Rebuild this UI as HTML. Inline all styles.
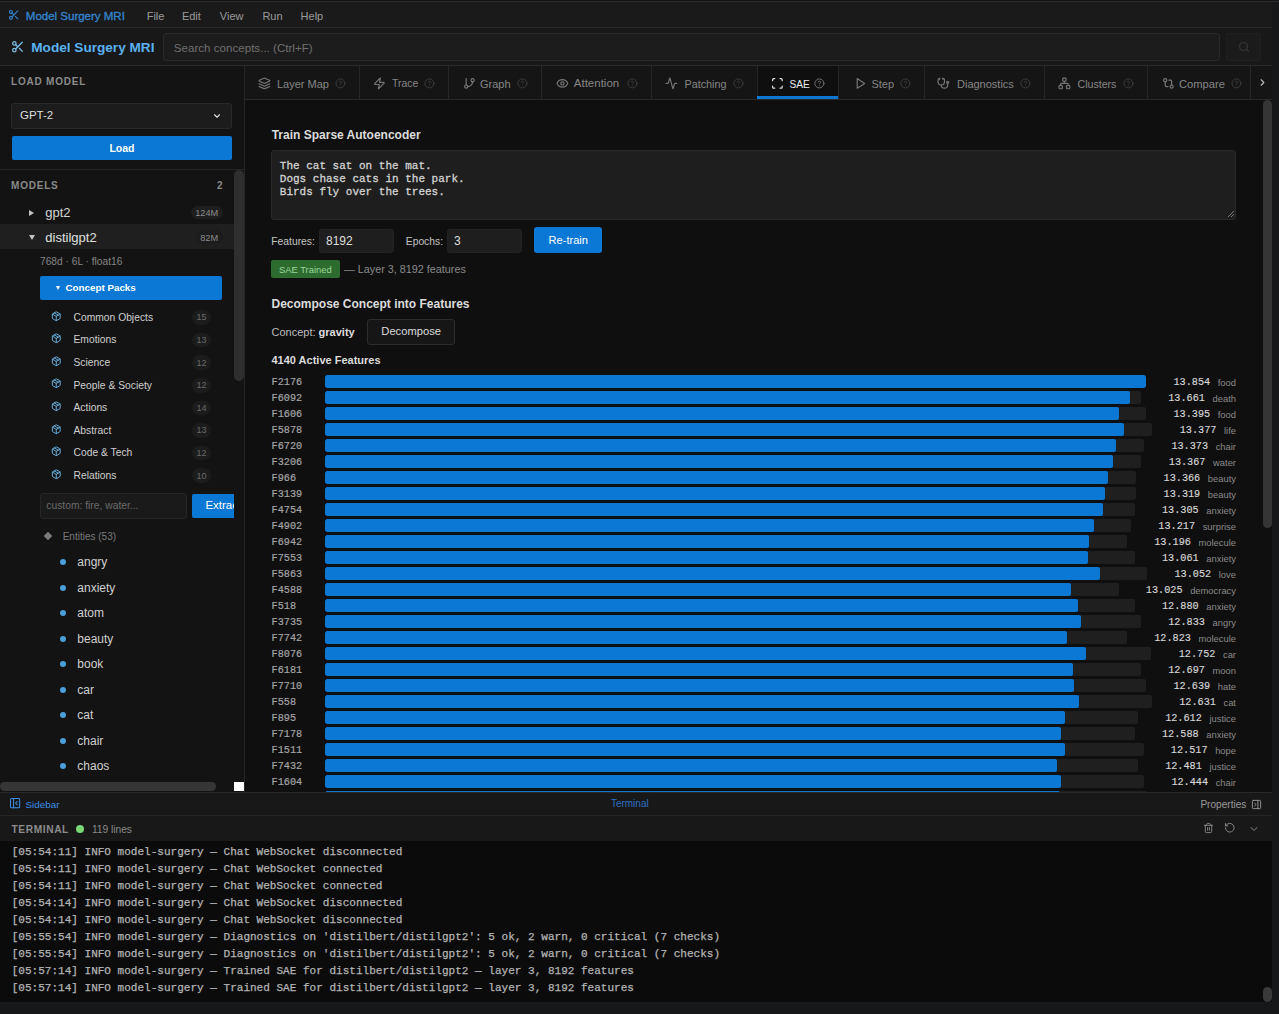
<!DOCTYPE html>
<html><head><meta charset="utf-8">
<style>
*{box-sizing:border-box;margin:0;padding:0}
html,body{width:1279px;height:1014px;overflow:hidden;background:#151719;font-family:"Liberation Sans",sans-serif;}
.abs{position:absolute}
svg.abs{display:block;overflow:visible}
.t{position:absolute;white-space:nowrap;line-height:1}
</style></head><body>
<div class="abs" style="left:0;top:0;width:1279px;height:1014px;background:#151719;overflow:hidden">

<div class="abs" style="left:0px;top:0px;width:1279px;height:1px;background:#141517"></div>
<div class="abs" style="left:0px;top:1px;width:1279px;height:1px;background:#2b2b2b"></div>
<div class="abs" style="left:0px;top:2px;width:1272px;height:26px;background:#1a1a1a;border-bottom:1px solid #2b2b2b"></div>
<svg class="abs" style="left:7.5px;top:8.8px;" width="11.8" height="11.8" viewBox="0 0 24 24" fill="none" stroke="#3383cc" stroke-width="2.3" stroke-linecap="round" stroke-linejoin="round"><circle cx="6" cy="6" r="3"/><path d="M8.12 8.12 12 12"/><path d="M20 4 8.12 15.88"/><circle cx="6" cy="18" r="3"/><path d="M14.8 14.8 20 20"/></svg>
<div class="t" style="left:25.80px;top:10.57px;font-size:11.5px;color:#3383cc;font-weight:400;font-family:'Liberation Sans',sans-serif;-webkit-text-stroke:0.35px #3383cc">Model Surgery MRI</div>
<div class="t" style="left:146.70px;top:10.99px;font-size:11px;color:#9a9a9a;font-weight:400;font-family:'Liberation Sans',sans-serif;">File</div>
<div class="t" style="left:181.90px;top:10.99px;font-size:11px;color:#9a9a9a;font-weight:400;font-family:'Liberation Sans',sans-serif;">Edit</div>
<div class="t" style="left:219.80px;top:10.99px;font-size:11px;color:#9a9a9a;font-weight:400;font-family:'Liberation Sans',sans-serif;">View</div>
<div class="t" style="left:262.40px;top:10.99px;font-size:11px;color:#9a9a9a;font-weight:400;font-family:'Liberation Sans',sans-serif;">Run</div>
<div class="t" style="left:300.60px;top:10.99px;font-size:11px;color:#9a9a9a;font-weight:400;font-family:'Liberation Sans',sans-serif;">Help</div>
<div class="abs" style="left:0px;top:28px;width:1272px;height:38px;background:#181818;border-bottom:1px solid #2b2b2b"></div>
<svg class="abs" style="left:11px;top:39.8px;" width="13.5" height="13.5" viewBox="0 0 24 24" fill="none" stroke="#78bce6" stroke-width="2.3" stroke-linecap="round" stroke-linejoin="round"><circle cx="6" cy="6" r="3"/><path d="M8.12 8.12 12 12"/><path d="M20 4 8.12 15.88"/><circle cx="6" cy="18" r="3"/><path d="M14.8 14.8 20 20"/></svg>
<div class="t" style="left:31.30px;top:41.09px;font-size:13.6px;color:#5ab2f0;font-weight:700;font-family:'Liberation Sans',sans-serif;">Model Surgery MRI</div>
<div class="abs" style="left:163px;top:32.5px;width:1057px;height:28.799999999999997px;background:#1c1c1c;border:1px solid #2a2a2a;border-radius:3px"></div>
<div class="t" style="left:173.80px;top:41.88px;font-size:11.6px;color:#707070;font-weight:400;font-family:'Liberation Sans',sans-serif;">Search concepts... (Ctrl+F)</div>
<div class="abs" style="left:1226px;top:32.5px;width:35px;height:28.799999999999997px;background:#1b1b1b;border:1px solid #202020;border-radius:2px"></div>
<svg class="abs" style="left:1238px;top:41px;" width="12" height="12" viewBox="0 0 24 24" fill="none" stroke="#363636" stroke-width="2.4" stroke-linecap="round" stroke-linejoin="round"><circle cx="11" cy="11" r="8"/><path d="m21 21-4.3-4.3"/></svg>
<div class="abs" style="left:0px;top:66px;width:245px;height:726px;background:#131313;border-right:1px solid #262626"></div>
<div class="t" style="left:11.00px;top:76.53px;font-size:10px;color:#8a8a8a;font-weight:700;font-family:'Liberation Sans',sans-serif;letter-spacing:0.8px;">LOAD MODEL</div>
<div class="abs" style="left:11px;top:103px;width:221px;height:25.5px;background:#1c1c1c;border:1px solid #2a2a2a;border-radius:3px"></div>
<div class="t" style="left:20.00px;top:109.87px;font-size:11.5px;color:#dedede;font-weight:400;font-family:'Liberation Sans',sans-serif;">GPT-2</div>
<svg class="abs" style="left:212px;top:111px;" width="10" height="10" viewBox="0 0 24 24" fill="none" stroke="#dedede" stroke-width="2.6" stroke-linecap="round" stroke-linejoin="round"><path d="m6 9 6 6 6-6"/></svg>
<div class="abs" style="left:12px;top:136px;width:220px;height:24px;background:#0a78d4;border-radius:2px"></div>
<div class="t" style="left:12px;top:143.01px;width:220px;text-align:center;font-size:10.5px;font-weight:700;color:#fff">Load</div>
<div class="abs" style="left:0px;top:169px;width:244px;height:1px;background:#262626"></div>
<div class="t" style="left:11.00px;top:180.94px;font-size:10px;color:#8a8a8a;font-weight:700;font-family:'Liberation Sans',sans-serif;letter-spacing:0.8px;">MODELS</div>
<div class="t" style="left:217.00px;top:180.94px;font-size:10px;color:#8a8a8a;font-weight:700;font-family:'Liberation Sans',sans-serif;">2</div>
<div class="abs" style="left:234px;top:170px;width:10px;height:211px;background:#2f2f2f;border-radius:5px"></div>
<div class="abs" style="left:0px;top:224.3px;width:234px;height:25.0px;background:#1f1f1f"></div>
<div class="abs" style="left:28.8px;top:210px;width:0;height:0;border-left:5px solid #c4c4c4;border-top:3px solid transparent;border-bottom:3px solid transparent"></div>
<div class="abs" style="left:28.6px;top:235.3px;width:0;height:0;border-top:5px solid #c4c4c4;border-left:3px solid transparent;border-right:3px solid transparent"></div>
<div class="t" style="left:45.30px;top:205.90px;font-size:13px;color:#d4d4d4;font-weight:400;font-family:'Liberation Sans',sans-serif;">gpt2</div>
<div class="t" style="left:45.30px;top:231.00px;font-size:13px;color:#e0e0e0;font-weight:400;font-family:'Liberation Sans',sans-serif;">distilgpt2</div>
<div class="abs" style="left:190.6px;top:205.7px;width:32.20000000000002px;height:13.700000000000017px;background:#1e1e1e;border-radius:7px"></div>
<div class="t" style="left:190.6px;top:208.81px;width:32.2px;text-align:center;font-size:9.2px;color:#8c8c8c">124M</div>
<div class="abs" style="left:195.5px;top:230px;width:27.30000000000001px;height:14px;background:#1c1c1c;border-radius:7px"></div>
<div class="t" style="left:195.5px;top:234.01px;width:27.3px;text-align:center;font-size:9.2px;color:#8c8c8c">82M</div>
<div class="t" style="left:40.00px;top:256.57px;font-size:10.2px;color:#858585;font-weight:400;font-family:'Liberation Sans',sans-serif;">768d · 6L · float16</div>
<div class="abs" style="left:40px;top:276px;width:182px;height:24px;background:#0a78d4;border-radius:2px"></div>
<div class="abs" style="left:56px;top:286px;width:0;height:0;border-top:4px solid #fff;border-left:2.5px solid transparent;border-right:2.5px solid transparent"></div>
<div class="t" style="left:65.50px;top:282.50px;font-size:9.8px;color:#ffffff;font-weight:700;font-family:'Liberation Sans',sans-serif;">Concept Packs</div>
<svg class="abs" style="left:51.3px;top:310.6px;" width="10.5" height="10.5" viewBox="0 0 24 24" fill="none" stroke="#6ab2e2" stroke-width="2.2" stroke-linecap="round" stroke-linejoin="round"><path d="M11 21.73a2 2 0 0 0 2 0l7-4A2 2 0 0 0 21 16V8a2 2 0 0 0-1-1.73l-7-4a2 2 0 0 0-2 0l-7 4A2 2 0 0 0 3 8v8a2 2 0 0 0 1 1.73z"/><path d="M12 22V12"/><path d="m3.3 7 7.703 4.734a2 2 0 0 0 1.994 0L20.7 7"/><path d="m7.5 4.27 9 5.15"/></svg>
<div class="t" style="left:73.50px;top:312.88px;font-size:10.3px;color:#cfcfcf;font-weight:400;font-family:'Liberation Sans',sans-serif;">Common Objects</div>
<div class="abs" style="left:191.7px;top:310.1px;width:19.700000000000017px;height:14.800000000000011px;background:#1c1c1c;border-radius:8px"></div>
<div class="t" style="left:191.7px;top:313.48px;width:19.7px;text-align:center;font-size:9px;color:#6a6a6a">15</div>
<svg class="abs" style="left:51.3px;top:333.20000000000005px;" width="10.5" height="10.5" viewBox="0 0 24 24" fill="none" stroke="#6ab2e2" stroke-width="2.2" stroke-linecap="round" stroke-linejoin="round"><path d="M11 21.73a2 2 0 0 0 2 0l7-4A2 2 0 0 0 21 16V8a2 2 0 0 0-1-1.73l-7-4a2 2 0 0 0-2 0l-7 4A2 2 0 0 0 3 8v8a2 2 0 0 0 1 1.73z"/><path d="M12 22V12"/><path d="m3.3 7 7.703 4.734a2 2 0 0 0 1.994 0L20.7 7"/><path d="m7.5 4.27 9 5.15"/></svg>
<div class="t" style="left:73.50px;top:335.48px;font-size:10.3px;color:#cfcfcf;font-weight:400;font-family:'Liberation Sans',sans-serif;">Emotions</div>
<div class="abs" style="left:191.7px;top:332.70000000000005px;width:19.700000000000017px;height:14.800000000000011px;background:#1c1c1c;border-radius:8px"></div>
<div class="t" style="left:191.7px;top:336.08px;width:19.7px;text-align:center;font-size:9px;color:#6a6a6a">13</div>
<svg class="abs" style="left:51.3px;top:355.8px;" width="10.5" height="10.5" viewBox="0 0 24 24" fill="none" stroke="#6ab2e2" stroke-width="2.2" stroke-linecap="round" stroke-linejoin="round"><path d="M11 21.73a2 2 0 0 0 2 0l7-4A2 2 0 0 0 21 16V8a2 2 0 0 0-1-1.73l-7-4a2 2 0 0 0-2 0l-7 4A2 2 0 0 0 3 8v8a2 2 0 0 0 1 1.73z"/><path d="M12 22V12"/><path d="m3.3 7 7.703 4.734a2 2 0 0 0 1.994 0L20.7 7"/><path d="m7.5 4.27 9 5.15"/></svg>
<div class="t" style="left:73.50px;top:358.08px;font-size:10.3px;color:#cfcfcf;font-weight:400;font-family:'Liberation Sans',sans-serif;">Science</div>
<div class="abs" style="left:191.7px;top:355.3px;width:19.700000000000017px;height:14.800000000000011px;background:#1c1c1c;border-radius:8px"></div>
<div class="t" style="left:191.7px;top:358.68px;width:19.7px;text-align:center;font-size:9px;color:#6a6a6a">12</div>
<svg class="abs" style="left:51.3px;top:378.40000000000003px;" width="10.5" height="10.5" viewBox="0 0 24 24" fill="none" stroke="#6ab2e2" stroke-width="2.2" stroke-linecap="round" stroke-linejoin="round"><path d="M11 21.73a2 2 0 0 0 2 0l7-4A2 2 0 0 0 21 16V8a2 2 0 0 0-1-1.73l-7-4a2 2 0 0 0-2 0l-7 4A2 2 0 0 0 3 8v8a2 2 0 0 0 1 1.73z"/><path d="M12 22V12"/><path d="m3.3 7 7.703 4.734a2 2 0 0 0 1.994 0L20.7 7"/><path d="m7.5 4.27 9 5.15"/></svg>
<div class="t" style="left:73.50px;top:380.68px;font-size:10.3px;color:#cfcfcf;font-weight:400;font-family:'Liberation Sans',sans-serif;">People &amp; Society</div>
<div class="abs" style="left:191.7px;top:377.90000000000003px;width:19.700000000000017px;height:14.800000000000011px;background:#1c1c1c;border-radius:8px"></div>
<div class="t" style="left:191.7px;top:381.28px;width:19.7px;text-align:center;font-size:9px;color:#6a6a6a">12</div>
<svg class="abs" style="left:51.3px;top:401.0px;" width="10.5" height="10.5" viewBox="0 0 24 24" fill="none" stroke="#6ab2e2" stroke-width="2.2" stroke-linecap="round" stroke-linejoin="round"><path d="M11 21.73a2 2 0 0 0 2 0l7-4A2 2 0 0 0 21 16V8a2 2 0 0 0-1-1.73l-7-4a2 2 0 0 0-2 0l-7 4A2 2 0 0 0 3 8v8a2 2 0 0 0 1 1.73z"/><path d="M12 22V12"/><path d="m3.3 7 7.703 4.734a2 2 0 0 0 1.994 0L20.7 7"/><path d="m7.5 4.27 9 5.15"/></svg>
<div class="t" style="left:73.50px;top:403.28px;font-size:10.3px;color:#cfcfcf;font-weight:400;font-family:'Liberation Sans',sans-serif;">Actions</div>
<div class="abs" style="left:191.7px;top:400.5px;width:19.700000000000017px;height:14.800000000000011px;background:#1c1c1c;border-radius:8px"></div>
<div class="t" style="left:191.7px;top:403.88px;width:19.7px;text-align:center;font-size:9px;color:#6a6a6a">14</div>
<svg class="abs" style="left:51.3px;top:423.6px;" width="10.5" height="10.5" viewBox="0 0 24 24" fill="none" stroke="#6ab2e2" stroke-width="2.2" stroke-linecap="round" stroke-linejoin="round"><path d="M11 21.73a2 2 0 0 0 2 0l7-4A2 2 0 0 0 21 16V8a2 2 0 0 0-1-1.73l-7-4a2 2 0 0 0-2 0l-7 4A2 2 0 0 0 3 8v8a2 2 0 0 0 1 1.73z"/><path d="M12 22V12"/><path d="m3.3 7 7.703 4.734a2 2 0 0 0 1.994 0L20.7 7"/><path d="m7.5 4.27 9 5.15"/></svg>
<div class="t" style="left:73.50px;top:425.88px;font-size:10.3px;color:#cfcfcf;font-weight:400;font-family:'Liberation Sans',sans-serif;">Abstract</div>
<div class="abs" style="left:191.7px;top:423.1px;width:19.700000000000017px;height:14.800000000000011px;background:#1c1c1c;border-radius:8px"></div>
<div class="t" style="left:191.7px;top:426.48px;width:19.7px;text-align:center;font-size:9px;color:#6a6a6a">13</div>
<svg class="abs" style="left:51.3px;top:446.20000000000005px;" width="10.5" height="10.5" viewBox="0 0 24 24" fill="none" stroke="#6ab2e2" stroke-width="2.2" stroke-linecap="round" stroke-linejoin="round"><path d="M11 21.73a2 2 0 0 0 2 0l7-4A2 2 0 0 0 21 16V8a2 2 0 0 0-1-1.73l-7-4a2 2 0 0 0-2 0l-7 4A2 2 0 0 0 3 8v8a2 2 0 0 0 1 1.73z"/><path d="M12 22V12"/><path d="m3.3 7 7.703 4.734a2 2 0 0 0 1.994 0L20.7 7"/><path d="m7.5 4.27 9 5.15"/></svg>
<div class="t" style="left:73.50px;top:448.48px;font-size:10.3px;color:#cfcfcf;font-weight:400;font-family:'Liberation Sans',sans-serif;">Code &amp; Tech</div>
<div class="abs" style="left:191.7px;top:445.70000000000005px;width:19.700000000000017px;height:14.800000000000011px;background:#1c1c1c;border-radius:8px"></div>
<div class="t" style="left:191.7px;top:449.08px;width:19.7px;text-align:center;font-size:9px;color:#6a6a6a">12</div>
<svg class="abs" style="left:51.3px;top:468.80000000000007px;" width="10.5" height="10.5" viewBox="0 0 24 24" fill="none" stroke="#6ab2e2" stroke-width="2.2" stroke-linecap="round" stroke-linejoin="round"><path d="M11 21.73a2 2 0 0 0 2 0l7-4A2 2 0 0 0 21 16V8a2 2 0 0 0-1-1.73l-7-4a2 2 0 0 0-2 0l-7 4A2 2 0 0 0 3 8v8a2 2 0 0 0 1 1.73z"/><path d="M12 22V12"/><path d="m3.3 7 7.703 4.734a2 2 0 0 0 1.994 0L20.7 7"/><path d="m7.5 4.27 9 5.15"/></svg>
<div class="t" style="left:73.50px;top:471.08px;font-size:10.3px;color:#cfcfcf;font-weight:400;font-family:'Liberation Sans',sans-serif;">Relations</div>
<div class="abs" style="left:191.7px;top:468.30000000000007px;width:19.700000000000017px;height:14.800000000000011px;background:#1c1c1c;border-radius:8px"></div>
<div class="t" style="left:191.7px;top:471.68px;width:19.7px;text-align:center;font-size:9px;color:#6a6a6a">10</div>
<div class="abs" style="left:40px;top:493px;width:146.5px;height:26px;background:#1a1a1a;border:1px solid #262626;border-radius:3px"></div>
<div class="t" style="left:46.30px;top:501.28px;font-size:10.3px;color:#6a6a6a;font-weight:400;font-family:'Liberation Sans',sans-serif;">custom: fire, water...</div>
<div class="abs" style="left:191.7px;top:493.5px;width:48.30000000000001px;height:24.5px;background:#0a78d4;border-radius:2px"></div>
<div class="t" style="left:205.40px;top:500.27px;font-size:11.5px;color:#ffffff;font-weight:400;font-family:'Liberation Sans',sans-serif;">Extract</div>
<div class="abs" style="left:234px;top:390px;width:10px;height:402px;background:#131313"></div>
<div class="abs" style="left:45px;top:533px;width:6px;height:6px;background:#7a7a7a;transform:rotate(45deg)"></div>
<div class="t" style="left:62.70px;top:532.13px;font-size:10px;color:#7a7a7a;font-weight:400;font-family:'Liberation Sans',sans-serif;">Entities (53)</div>
<div class="abs" style="left:60px;top:559.3px;width:6px;height:6.0px;background:#4a9fd8;border-radius:50%"></div>
<div class="t" style="left:77.30px;top:556.14px;font-size:12px;color:#d0d0d0;font-weight:400;font-family:'Liberation Sans',sans-serif;">angry</div>
<div class="abs" style="left:60px;top:584.8px;width:6px;height:6.0px;background:#4a9fd8;border-radius:50%"></div>
<div class="t" style="left:77.30px;top:581.64px;font-size:12px;color:#d0d0d0;font-weight:400;font-family:'Liberation Sans',sans-serif;">anxiety</div>
<div class="abs" style="left:60px;top:610.3px;width:6px;height:6.0px;background:#4a9fd8;border-radius:50%"></div>
<div class="t" style="left:77.30px;top:607.14px;font-size:12px;color:#d0d0d0;font-weight:400;font-family:'Liberation Sans',sans-serif;">atom</div>
<div class="abs" style="left:60px;top:635.8px;width:6px;height:6.0px;background:#4a9fd8;border-radius:50%"></div>
<div class="t" style="left:77.30px;top:632.64px;font-size:12px;color:#d0d0d0;font-weight:400;font-family:'Liberation Sans',sans-serif;">beauty</div>
<div class="abs" style="left:60px;top:661.3px;width:6px;height:6.0px;background:#4a9fd8;border-radius:50%"></div>
<div class="t" style="left:77.30px;top:658.14px;font-size:12px;color:#d0d0d0;font-weight:400;font-family:'Liberation Sans',sans-serif;">book</div>
<div class="abs" style="left:60px;top:686.8px;width:6px;height:6.0px;background:#4a9fd8;border-radius:50%"></div>
<div class="t" style="left:77.30px;top:683.64px;font-size:12px;color:#d0d0d0;font-weight:400;font-family:'Liberation Sans',sans-serif;">car</div>
<div class="abs" style="left:60px;top:712.3px;width:6px;height:6.0px;background:#4a9fd8;border-radius:50%"></div>
<div class="t" style="left:77.30px;top:709.14px;font-size:12px;color:#d0d0d0;font-weight:400;font-family:'Liberation Sans',sans-serif;">cat</div>
<div class="abs" style="left:60px;top:737.8px;width:6px;height:6.0px;background:#4a9fd8;border-radius:50%"></div>
<div class="t" style="left:77.30px;top:734.64px;font-size:12px;color:#d0d0d0;font-weight:400;font-family:'Liberation Sans',sans-serif;">chair</div>
<div class="abs" style="left:60px;top:763.3px;width:6px;height:6.0px;background:#4a9fd8;border-radius:50%"></div>
<div class="t" style="left:77.30px;top:760.14px;font-size:12px;color:#d0d0d0;font-weight:400;font-family:'Liberation Sans',sans-serif;">chaos</div>
<div class="abs" style="left:0px;top:782px;width:216px;height:9px;background:#363636;border-radius:5px"></div>
<div class="abs" style="left:234px;top:782px;width:10px;height:9px;background:#ffffff"></div>
<div class="abs" style="left:245px;top:66px;width:1027px;height:726px;background:#0f0f0f"></div>
<div class="abs" style="left:245px;top:66px;width:1027px;height:34px;background:#151515;border-bottom:1px solid #2a2a2a"></div>
<div class="abs" style="left:359px;top:66px;width:1px;height:33px;background:#262626"></div>
<div class="abs" style="left:448px;top:66px;width:1px;height:33px;background:#262626"></div>
<div class="abs" style="left:541px;top:66px;width:1px;height:33px;background:#262626"></div>
<div class="abs" style="left:651px;top:66px;width:1px;height:33px;background:#262626"></div>
<div class="abs" style="left:838px;top:66px;width:1px;height:33px;background:#262626"></div>
<div class="abs" style="left:924px;top:66px;width:1px;height:33px;background:#262626"></div>
<div class="abs" style="left:1044px;top:66px;width:1px;height:33px;background:#262626"></div>
<div class="abs" style="left:1147px;top:66px;width:1px;height:33px;background:#262626"></div>
<div class="abs" style="left:1250px;top:66px;width:1px;height:33px;background:#262626"></div>
<div class="abs" style="left:757px;top:66px;width:81px;height:33px;background:#0f0f0f;border-left:1px solid #262626"></div>
<div class="abs" style="left:757px;top:96px;width:81px;height:3px;background:#0a78d4"></div>
<svg class="abs" style="left:257.5px;top:76.5px;" width="12.8" height="12.8" viewBox="0 0 24 24" fill="none" stroke="#767676" stroke-width="2.2" stroke-linecap="round" stroke-linejoin="round"><path d="m12.83 2.18a2 2 0 0 0-1.66 0L2.6 6.08a1 1 0 0 0 0 1.83l8.58 3.91a2 2 0 0 0 1.66 0l8.58-3.9a1 1 0 0 0 0-1.83Z"/><path d="m22 17.65-9.17 4.16a2 2 0 0 1-1.66 0L2 17.65"/><path d="m22 12.65-9.17 4.16a2 2 0 0 1-1.66 0L2 12.65"/></svg>
<div class="t" style="left:277.00px;top:78.89px;font-size:11px;color:#868686;font-weight:400;font-family:'Liberation Sans',sans-serif;">Layer Map</div>
<svg class="abs" style="left:334.5px;top:77.8px;" width="10.8" height="10.8" viewBox="0 0 24 24" fill="none" stroke="#3e3e3e" stroke-width="2" stroke-linecap="round" stroke-linejoin="round"><circle cx="12" cy="12" r="10"/><path d="M9.09 9a3 3 0 0 1 5.83 1c0 2-3 3-3 3"/><path d="M12 17h.01"/></svg>
<svg class="abs" style="left:372.5px;top:76.5px;" width="12.8" height="12.8" viewBox="0 0 24 24" fill="none" stroke="#767676" stroke-width="2.2" stroke-linecap="round" stroke-linejoin="round"><path d="M4 14a1 1 0 0 1-.78-1.63l9.9-10.2a.5.5 0 0 1 .86.46l-1.92 6.02A1 1 0 0 0 13 10h7a1 1 0 0 1 .78 1.63l-9.9 10.2a.5.5 0 0 1-.86-.46l1.92-6.02A1 1 0 0 0 11 14z"/></svg>
<div class="t" style="left:392.00px;top:79.40px;font-size:10.4px;color:#868686;font-weight:400;font-family:'Liberation Sans',sans-serif;">Trace</div>
<svg class="abs" style="left:423.8px;top:77.8px;" width="10.8" height="10.8" viewBox="0 0 24 24" fill="none" stroke="#3e3e3e" stroke-width="2" stroke-linecap="round" stroke-linejoin="round"><circle cx="12" cy="12" r="10"/><path d="M9.09 9a3 3 0 0 1 5.83 1c0 2-3 3-3 3"/><path d="M12 17h.01"/></svg>
<svg class="abs" style="left:462.5px;top:76.5px;" width="12.8" height="12.8" viewBox="0 0 24 24" fill="none" stroke="#767676" stroke-width="2.2" stroke-linecap="round" stroke-linejoin="round"><line x1="6" x2="6" y1="3" y2="15"/><circle cx="18" cy="6" r="3"/><circle cx="6" cy="18" r="3"/><path d="M18 9a9 9 0 0 1-9 9"/></svg>
<div class="t" style="left:480.00px;top:78.89px;font-size:11px;color:#868686;font-weight:400;font-family:'Liberation Sans',sans-serif;">Graph</div>
<svg class="abs" style="left:517px;top:77.8px;" width="10.8" height="10.8" viewBox="0 0 24 24" fill="none" stroke="#3e3e3e" stroke-width="2" stroke-linecap="round" stroke-linejoin="round"><circle cx="12" cy="12" r="10"/><path d="M9.09 9a3 3 0 0 1 5.83 1c0 2-3 3-3 3"/><path d="M12 17h.01"/></svg>
<svg class="abs" style="left:555.5px;top:76.5px;" width="12.8" height="12.8" viewBox="0 0 24 24" fill="none" stroke="#767676" stroke-width="2.2" stroke-linecap="round" stroke-linejoin="round"><path d="M2.062 12.348a1 1 0 0 1 0-.696 10.75 10.75 0 0 1 19.876 0 1 1 0 0 1 0 .696 10.75 10.75 0 0 1-19.876 0"/><circle cx="12" cy="12" r="3"/></svg>
<div class="t" style="left:573.80px;top:78.47px;font-size:11.5px;color:#868686;font-weight:400;font-family:'Liberation Sans',sans-serif;">Attention</div>
<svg class="abs" style="left:627px;top:77.8px;" width="10.8" height="10.8" viewBox="0 0 24 24" fill="none" stroke="#3e3e3e" stroke-width="2" stroke-linecap="round" stroke-linejoin="round"><circle cx="12" cy="12" r="10"/><path d="M9.09 9a3 3 0 0 1 5.83 1c0 2-3 3-3 3"/><path d="M12 17h.01"/></svg>
<svg class="abs" style="left:665px;top:76.5px;" width="12.8" height="12.8" viewBox="0 0 24 24" fill="none" stroke="#767676" stroke-width="2.2" stroke-linecap="round" stroke-linejoin="round"><path d="M22 12h-2.48a2 2 0 0 0-1.93 1.46l-2.35 8.36a.25.25 0 0 1-.48 0L9.24 2.18a.25.25 0 0 0-.48 0l-2.35 8.36A2 2 0 0 1 4.49 12H2"/></svg>
<div class="t" style="left:684.50px;top:79.06px;font-size:10.8px;color:#868686;font-weight:400;font-family:'Liberation Sans',sans-serif;">Patching</div>
<svg class="abs" style="left:732.5px;top:77.8px;" width="10.8" height="10.8" viewBox="0 0 24 24" fill="none" stroke="#3e3e3e" stroke-width="2" stroke-linecap="round" stroke-linejoin="round"><circle cx="12" cy="12" r="10"/><path d="M9.09 9a3 3 0 0 1 5.83 1c0 2-3 3-3 3"/><path d="M12 17h.01"/></svg>
<svg class="abs" style="left:770.5px;top:76.5px;" width="12.8" height="12.8" viewBox="0 0 24 24" fill="none" stroke="#e6e6e6" stroke-width="2.2" stroke-linecap="round" stroke-linejoin="round"><path d="M3 7V5a2 2 0 0 1 2-2h2"/><path d="M17 3h2a2 2 0 0 1 2 2v2"/><path d="M21 17v2a2 2 0 0 1-2 2h-2"/><path d="M7 21H5a2 2 0 0 1-2-2v-2"/></svg>
<div class="t" style="left:789.50px;top:79.57px;font-size:10.2px;color:#ececec;font-weight:400;font-family:'Liberation Sans',sans-serif;">SAE</div>
<svg class="abs" style="left:813.8px;top:77.8px;" width="10.8" height="10.8" viewBox="0 0 24 24" fill="none" stroke="#7a7a7a" stroke-width="2" stroke-linecap="round" stroke-linejoin="round"><circle cx="12" cy="12" r="10"/><path d="M9.09 9a3 3 0 0 1 5.83 1c0 2-3 3-3 3"/><path d="M12 17h.01"/></svg>
<svg class="abs" style="left:853.9px;top:76.5px;" width="12.8" height="12.8" viewBox="0 0 24 24" fill="none" stroke="#767676" stroke-width="2.2" stroke-linecap="round" stroke-linejoin="round"><polygon points="6 3 20 12 6 21 6 3"/></svg>
<div class="t" style="left:871.40px;top:78.89px;font-size:11px;color:#868686;font-weight:400;font-family:'Liberation Sans',sans-serif;">Step</div>
<svg class="abs" style="left:900px;top:77.8px;" width="10.8" height="10.8" viewBox="0 0 24 24" fill="none" stroke="#3e3e3e" stroke-width="2" stroke-linecap="round" stroke-linejoin="round"><circle cx="12" cy="12" r="10"/><path d="M9.09 9a3 3 0 0 1 5.83 1c0 2-3 3-3 3"/><path d="M12 17h.01"/></svg>
<svg class="abs" style="left:937px;top:76.5px;" width="12.8" height="12.8" viewBox="0 0 24 24" fill="none" stroke="#767676" stroke-width="2.2" stroke-linecap="round" stroke-linejoin="round"><path d="M11 2v2"/><path d="M5 2v2"/><path d="M5 3H4a2 2 0 0 0-2 2v4a6 6 0 0 0 12 0V5a2 2 0 0 0-2-2h-1"/><path d="M8 15a6 6 0 0 0 12 0v-3"/><circle cx="20" cy="10" r="2"/></svg>
<div class="t" style="left:957.00px;top:78.89px;font-size:11px;color:#868686;font-weight:400;font-family:'Liberation Sans',sans-serif;">Diagnostics</div>
<svg class="abs" style="left:1020px;top:77.8px;" width="10.8" height="10.8" viewBox="0 0 24 24" fill="none" stroke="#3e3e3e" stroke-width="2" stroke-linecap="round" stroke-linejoin="round"><circle cx="12" cy="12" r="10"/><path d="M9.09 9a3 3 0 0 1 5.83 1c0 2-3 3-3 3"/><path d="M12 17h.01"/></svg>
<svg class="abs" style="left:1058px;top:76.5px;" width="12.8" height="12.8" viewBox="0 0 24 24" fill="none" stroke="#767676" stroke-width="2.2" stroke-linecap="round" stroke-linejoin="round"><rect x="16" y="16" width="6" height="6" rx="1"/><rect x="2" y="16" width="6" height="6" rx="1"/><rect x="9" y="2" width="6" height="6" rx="1"/><path d="M5 16v-3a1 1 0 0 1 1-1h12a1 1 0 0 1 1 1v3"/><path d="M12 12V8"/></svg>
<div class="t" style="left:1077.50px;top:79.23px;font-size:10.6px;color:#868686;font-weight:400;font-family:'Liberation Sans',sans-serif;">Clusters</div>
<svg class="abs" style="left:1123px;top:77.8px;" width="10.8" height="10.8" viewBox="0 0 24 24" fill="none" stroke="#3e3e3e" stroke-width="2" stroke-linecap="round" stroke-linejoin="round"><circle cx="12" cy="12" r="10"/><path d="M9.09 9a3 3 0 0 1 5.83 1c0 2-3 3-3 3"/><path d="M12 17h.01"/></svg>
<svg class="abs" style="left:1161.7px;top:76.5px;" width="12.8" height="12.8" viewBox="0 0 24 24" fill="none" stroke="#767676" stroke-width="2.2" stroke-linecap="round" stroke-linejoin="round"><circle cx="18" cy="18" r="3"/><circle cx="6" cy="6" r="3"/><path d="M13 6h3a2 2 0 0 1 2 2v7"/><path d="M11 18H8a2 2 0 0 1-2-2V9"/></svg>
<div class="t" style="left:1179.00px;top:78.72px;font-size:11.2px;color:#868686;font-weight:400;font-family:'Liberation Sans',sans-serif;">Compare</div>
<svg class="abs" style="left:1231px;top:77.8px;" width="10.8" height="10.8" viewBox="0 0 24 24" fill="none" stroke="#3e3e3e" stroke-width="2" stroke-linecap="round" stroke-linejoin="round"><circle cx="12" cy="12" r="10"/><path d="M9.09 9a3 3 0 0 1 5.83 1c0 2-3 3-3 3"/><path d="M12 17h.01"/></svg>
<svg class="abs" style="left:1257px;top:77px;" width="11" height="11" viewBox="0 0 24 24" fill="none" stroke="#bdbdbd" stroke-width="2.4" stroke-linecap="round" stroke-linejoin="round"><path d="m9 18 6-6-6-6"/></svg>
<div class="t" style="left:271.70px;top:129.14px;font-size:12px;color:#dcdcdc;font-weight:700;font-family:'Liberation Sans',sans-serif;">Train Sparse Autoencoder</div>
<div class="abs" style="left:271px;top:150px;width:965px;height:69.5px;background:#1e1e1e;border:1px solid #292929;border-radius:3px"></div>
<div class="t" style="left:279.80px;top:160.57px;font-size:11px;color:#d2d2d2;font-weight:400;font-family:'Liberation Mono',monospace;-webkit-text-stroke:0.3px #d2d2d2">The cat sat on the mat.</div>
<div class="t" style="left:279.80px;top:173.67px;font-size:11px;color:#d2d2d2;font-weight:400;font-family:'Liberation Mono',monospace;-webkit-text-stroke:0.3px #d2d2d2">Dogs chase cats in the park.</div>
<div class="t" style="left:279.80px;top:186.77px;font-size:11px;color:#d2d2d2;font-weight:400;font-family:'Liberation Mono',monospace;-webkit-text-stroke:0.3px #d2d2d2">Birds fly over the trees.</div>
<svg class="abs" style="left:1227px;top:210px" width="8" height="8" viewBox="0 0 8 8"><path d="M7 1 1 7M7 4 4 7" stroke="#777" stroke-width="1"/></svg>
<div class="t" style="left:271.30px;top:236.78px;font-size:10.3px;color:#c4c4c4;font-weight:400;font-family:'Liberation Sans',sans-serif;">Features:</div>
<div class="abs" style="left:319px;top:229px;width:75px;height:23.5px;background:#1e1e1e;border:1px solid #232323;border-radius:3px"></div>
<div class="t" style="left:326.00px;top:234.84px;font-size:12px;color:#dedede;font-weight:400;font-family:'Liberation Sans',sans-serif;">8192</div>
<div class="t" style="left:405.80px;top:236.78px;font-size:10.3px;color:#c4c4c4;font-weight:400;font-family:'Liberation Sans',sans-serif;">Epochs:</div>
<div class="abs" style="left:447px;top:229px;width:75px;height:23.5px;background:#1e1e1e;border:1px solid #232323;border-radius:3px"></div>
<div class="t" style="left:454.00px;top:234.84px;font-size:12px;color:#dedede;font-weight:400;font-family:'Liberation Sans',sans-serif;">3</div>
<div class="abs" style="left:534px;top:227px;width:68px;height:26px;background:#0a78d4;border-radius:3px"></div>
<div class="t" style="left:548.50px;top:234.90px;font-size:11.1px;color:#ffffff;font-weight:400;font-family:'Liberation Sans',sans-serif;">Re-train</div>
<div class="abs" style="left:271px;top:260px;width:69px;height:18px;background:#2d6b2f;border-radius:2px"></div>
<div class="t" style="left:279.00px;top:265.04px;font-size:9.4px;color:#9bd89b;font-weight:400;font-family:'Liberation Sans',sans-serif;">SAE Trained</div>
<div class="t" style="left:344.00px;top:263.86px;font-size:10.8px;color:#8a8a8a;font-weight:400;font-family:'Liberation Sans',sans-serif;">— Layer 3, 8192 features</div>
<div class="t" style="left:271.50px;top:297.54px;font-size:12px;color:#dcdcdc;font-weight:700;font-family:'Liberation Sans',sans-serif;">Decompose Concept into Features</div>
<div class="t" style="left:271.5px;top:326.99px;font-size:11px;color:#bdbdbd">Concept: <b style="color:#dedede">gravity</b></div>
<div class="abs" style="left:367px;top:318.5px;width:88px;height:26.5px;background:#161616;border:1px solid #2c2c2c;border-radius:3px"></div>
<div class="t" style="left:381.30px;top:325.72px;font-size:11.2px;color:#dcdcdc;font-weight:400;font-family:'Liberation Sans',sans-serif;">Decompose</div>
<div class="t" style="left:271.50px;top:355.19px;font-size:11px;color:#dcdcdc;font-weight:700;font-family:'Liberation Sans',sans-serif;">4140 Active Features</div>
<div class="abs" style="left:271.6px;top:375px;width:964.4px;height:13px;display:flex;align-items:center"><div style="width:53.7px;font-family:'Liberation Mono',monospace;font-size:10.2px;color:#a4a4a4;-webkit-text-stroke:0.2px #a4a4a4;line-height:13px;white-space:nowrap;position:relative;top:1.4px">F2176</div><div style="flex:1;height:13px;background:#1f1f1f;border-radius:2px;position:relative;overflow:hidden"><div style="position:absolute;left:0;top:0;bottom:0;width:100.000%;background:#0a78d4;border-radius:2px"></div></div><div style="width:64px;text-align:right;font-family:'Liberation Mono',monospace;font-size:10.2px;font-weight:400;-webkit-text-stroke:0.15px #d8d8d8;color:#d8d8d8;line-height:13px;white-space:nowrap;position:relative;top:1px">13.854</div><div style="margin-left:7.6px;font-size:9.4px;color:#8a8a8a;line-height:13px;white-space:nowrap;position:relative;top:1.2px">food</div></div>
<div class="abs" style="left:271.6px;top:391px;width:964.4px;height:13px;display:flex;align-items:center"><div style="width:53.7px;font-family:'Liberation Mono',monospace;font-size:10.2px;color:#a4a4a4;-webkit-text-stroke:0.2px #a4a4a4;line-height:13px;white-space:nowrap;position:relative;top:1.4px">F6092</div><div style="flex:1;height:13px;background:#1f1f1f;border-radius:2px;position:relative;overflow:hidden"><div style="position:absolute;left:0;top:0;bottom:0;width:98.607%;background:#0a78d4;border-radius:2px"></div></div><div style="width:64px;text-align:right;font-family:'Liberation Mono',monospace;font-size:10.2px;font-weight:400;-webkit-text-stroke:0.15px #d8d8d8;color:#d8d8d8;line-height:13px;white-space:nowrap;position:relative;top:1px">13.661</div><div style="margin-left:7.6px;font-size:9.4px;color:#8a8a8a;line-height:13px;white-space:nowrap;position:relative;top:1.2px">death</div></div>
<div class="abs" style="left:271.6px;top:407px;width:964.4px;height:13px;display:flex;align-items:center"><div style="width:53.7px;font-family:'Liberation Mono',monospace;font-size:10.2px;color:#a4a4a4;-webkit-text-stroke:0.2px #a4a4a4;line-height:13px;white-space:nowrap;position:relative;top:1.4px">F1606</div><div style="flex:1;height:13px;background:#1f1f1f;border-radius:2px;position:relative;overflow:hidden"><div style="position:absolute;left:0;top:0;bottom:0;width:96.687%;background:#0a78d4;border-radius:2px"></div></div><div style="width:64px;text-align:right;font-family:'Liberation Mono',monospace;font-size:10.2px;font-weight:400;-webkit-text-stroke:0.15px #d8d8d8;color:#d8d8d8;line-height:13px;white-space:nowrap;position:relative;top:1px">13.395</div><div style="margin-left:7.6px;font-size:9.4px;color:#8a8a8a;line-height:13px;white-space:nowrap;position:relative;top:1.2px">food</div></div>
<div class="abs" style="left:271.6px;top:423px;width:964.4px;height:13px;display:flex;align-items:center"><div style="width:53.7px;font-family:'Liberation Mono',monospace;font-size:10.2px;color:#a4a4a4;-webkit-text-stroke:0.2px #a4a4a4;line-height:13px;white-space:nowrap;position:relative;top:1.4px">F5878</div><div style="flex:1;height:13px;background:#1f1f1f;border-radius:2px;position:relative;overflow:hidden"><div style="position:absolute;left:0;top:0;bottom:0;width:96.557%;background:#0a78d4;border-radius:2px"></div></div><div style="width:64px;text-align:right;font-family:'Liberation Mono',monospace;font-size:10.2px;font-weight:400;-webkit-text-stroke:0.15px #d8d8d8;color:#d8d8d8;line-height:13px;white-space:nowrap;position:relative;top:1px">13.377</div><div style="margin-left:7.6px;font-size:9.4px;color:#8a8a8a;line-height:13px;white-space:nowrap;position:relative;top:1.2px">life</div></div>
<div class="abs" style="left:271.6px;top:439px;width:964.4px;height:13px;display:flex;align-items:center"><div style="width:53.7px;font-family:'Liberation Mono',monospace;font-size:10.2px;color:#a4a4a4;-webkit-text-stroke:0.2px #a4a4a4;line-height:13px;white-space:nowrap;position:relative;top:1.4px">F6720</div><div style="flex:1;height:13px;background:#1f1f1f;border-radius:2px;position:relative;overflow:hidden"><div style="position:absolute;left:0;top:0;bottom:0;width:96.528%;background:#0a78d4;border-radius:2px"></div></div><div style="width:64px;text-align:right;font-family:'Liberation Mono',monospace;font-size:10.2px;font-weight:400;-webkit-text-stroke:0.15px #d8d8d8;color:#d8d8d8;line-height:13px;white-space:nowrap;position:relative;top:1px">13.373</div><div style="margin-left:7.6px;font-size:9.4px;color:#8a8a8a;line-height:13px;white-space:nowrap;position:relative;top:1.2px">chair</div></div>
<div class="abs" style="left:271.6px;top:455px;width:964.4px;height:13px;display:flex;align-items:center"><div style="width:53.7px;font-family:'Liberation Mono',monospace;font-size:10.2px;color:#a4a4a4;-webkit-text-stroke:0.2px #a4a4a4;line-height:13px;white-space:nowrap;position:relative;top:1.4px">F3206</div><div style="flex:1;height:13px;background:#1f1f1f;border-radius:2px;position:relative;overflow:hidden"><div style="position:absolute;left:0;top:0;bottom:0;width:96.485%;background:#0a78d4;border-radius:2px"></div></div><div style="width:64px;text-align:right;font-family:'Liberation Mono',monospace;font-size:10.2px;font-weight:400;-webkit-text-stroke:0.15px #d8d8d8;color:#d8d8d8;line-height:13px;white-space:nowrap;position:relative;top:1px">13.367</div><div style="margin-left:7.6px;font-size:9.4px;color:#8a8a8a;line-height:13px;white-space:nowrap;position:relative;top:1.2px">water</div></div>
<div class="abs" style="left:271.6px;top:471px;width:964.4px;height:13px;display:flex;align-items:center"><div style="width:53.7px;font-family:'Liberation Mono',monospace;font-size:10.2px;color:#a4a4a4;-webkit-text-stroke:0.2px #a4a4a4;line-height:13px;white-space:nowrap;position:relative;top:1.4px">F966</div><div style="flex:1;height:13px;background:#1f1f1f;border-radius:2px;position:relative;overflow:hidden"><div style="position:absolute;left:0;top:0;bottom:0;width:96.478%;background:#0a78d4;border-radius:2px"></div></div><div style="width:64px;text-align:right;font-family:'Liberation Mono',monospace;font-size:10.2px;font-weight:400;-webkit-text-stroke:0.15px #d8d8d8;color:#d8d8d8;line-height:13px;white-space:nowrap;position:relative;top:1px">13.366</div><div style="margin-left:7.6px;font-size:9.4px;color:#8a8a8a;line-height:13px;white-space:nowrap;position:relative;top:1.2px">beauty</div></div>
<div class="abs" style="left:271.6px;top:487px;width:964.4px;height:13px;display:flex;align-items:center"><div style="width:53.7px;font-family:'Liberation Mono',monospace;font-size:10.2px;color:#a4a4a4;-webkit-text-stroke:0.2px #a4a4a4;line-height:13px;white-space:nowrap;position:relative;top:1.4px">F3139</div><div style="flex:1;height:13px;background:#1f1f1f;border-radius:2px;position:relative;overflow:hidden"><div style="position:absolute;left:0;top:0;bottom:0;width:96.138%;background:#0a78d4;border-radius:2px"></div></div><div style="width:64px;text-align:right;font-family:'Liberation Mono',monospace;font-size:10.2px;font-weight:400;-webkit-text-stroke:0.15px #d8d8d8;color:#d8d8d8;line-height:13px;white-space:nowrap;position:relative;top:1px">13.319</div><div style="margin-left:7.6px;font-size:9.4px;color:#8a8a8a;line-height:13px;white-space:nowrap;position:relative;top:1.2px">beauty</div></div>
<div class="abs" style="left:271.6px;top:503px;width:964.4px;height:13px;display:flex;align-items:center"><div style="width:53.7px;font-family:'Liberation Mono',monospace;font-size:10.2px;color:#a4a4a4;-webkit-text-stroke:0.2px #a4a4a4;line-height:13px;white-space:nowrap;position:relative;top:1.4px">F4754</div><div style="flex:1;height:13px;background:#1f1f1f;border-radius:2px;position:relative;overflow:hidden"><div style="position:absolute;left:0;top:0;bottom:0;width:96.037%;background:#0a78d4;border-radius:2px"></div></div><div style="width:64px;text-align:right;font-family:'Liberation Mono',monospace;font-size:10.2px;font-weight:400;-webkit-text-stroke:0.15px #d8d8d8;color:#d8d8d8;line-height:13px;white-space:nowrap;position:relative;top:1px">13.305</div><div style="margin-left:7.6px;font-size:9.4px;color:#8a8a8a;line-height:13px;white-space:nowrap;position:relative;top:1.2px">anxiety</div></div>
<div class="abs" style="left:271.6px;top:519px;width:964.4px;height:13px;display:flex;align-items:center"><div style="width:53.7px;font-family:'Liberation Mono',monospace;font-size:10.2px;color:#a4a4a4;-webkit-text-stroke:0.2px #a4a4a4;line-height:13px;white-space:nowrap;position:relative;top:1.4px">F4902</div><div style="flex:1;height:13px;background:#1f1f1f;border-radius:2px;position:relative;overflow:hidden"><div style="position:absolute;left:0;top:0;bottom:0;width:95.402%;background:#0a78d4;border-radius:2px"></div></div><div style="width:64px;text-align:right;font-family:'Liberation Mono',monospace;font-size:10.2px;font-weight:400;-webkit-text-stroke:0.15px #d8d8d8;color:#d8d8d8;line-height:13px;white-space:nowrap;position:relative;top:1px">13.217</div><div style="margin-left:7.6px;font-size:9.4px;color:#8a8a8a;line-height:13px;white-space:nowrap;position:relative;top:1.2px">surprise</div></div>
<div class="abs" style="left:271.6px;top:535px;width:964.4px;height:13px;display:flex;align-items:center"><div style="width:53.7px;font-family:'Liberation Mono',monospace;font-size:10.2px;color:#a4a4a4;-webkit-text-stroke:0.2px #a4a4a4;line-height:13px;white-space:nowrap;position:relative;top:1.4px">F6942</div><div style="flex:1;height:13px;background:#1f1f1f;border-radius:2px;position:relative;overflow:hidden"><div style="position:absolute;left:0;top:0;bottom:0;width:95.250%;background:#0a78d4;border-radius:2px"></div></div><div style="width:64px;text-align:right;font-family:'Liberation Mono',monospace;font-size:10.2px;font-weight:400;-webkit-text-stroke:0.15px #d8d8d8;color:#d8d8d8;line-height:13px;white-space:nowrap;position:relative;top:1px">13.196</div><div style="margin-left:7.6px;font-size:9.4px;color:#8a8a8a;line-height:13px;white-space:nowrap;position:relative;top:1.2px">molecule</div></div>
<div class="abs" style="left:271.6px;top:551px;width:964.4px;height:13px;display:flex;align-items:center"><div style="width:53.7px;font-family:'Liberation Mono',monospace;font-size:10.2px;color:#a4a4a4;-webkit-text-stroke:0.2px #a4a4a4;line-height:13px;white-space:nowrap;position:relative;top:1.4px">F7553</div><div style="flex:1;height:13px;background:#1f1f1f;border-radius:2px;position:relative;overflow:hidden"><div style="position:absolute;left:0;top:0;bottom:0;width:94.276%;background:#0a78d4;border-radius:2px"></div></div><div style="width:64px;text-align:right;font-family:'Liberation Mono',monospace;font-size:10.2px;font-weight:400;-webkit-text-stroke:0.15px #d8d8d8;color:#d8d8d8;line-height:13px;white-space:nowrap;position:relative;top:1px">13.061</div><div style="margin-left:7.6px;font-size:9.4px;color:#8a8a8a;line-height:13px;white-space:nowrap;position:relative;top:1.2px">anxiety</div></div>
<div class="abs" style="left:271.6px;top:567px;width:964.4px;height:13px;display:flex;align-items:center"><div style="width:53.7px;font-family:'Liberation Mono',monospace;font-size:10.2px;color:#a4a4a4;-webkit-text-stroke:0.2px #a4a4a4;line-height:13px;white-space:nowrap;position:relative;top:1.4px">F5863</div><div style="flex:1;height:13px;background:#1f1f1f;border-radius:2px;position:relative;overflow:hidden"><div style="position:absolute;left:0;top:0;bottom:0;width:94.211%;background:#0a78d4;border-radius:2px"></div></div><div style="width:64px;text-align:right;font-family:'Liberation Mono',monospace;font-size:10.2px;font-weight:400;-webkit-text-stroke:0.15px #d8d8d8;color:#d8d8d8;line-height:13px;white-space:nowrap;position:relative;top:1px">13.052</div><div style="margin-left:7.6px;font-size:9.4px;color:#8a8a8a;line-height:13px;white-space:nowrap;position:relative;top:1.2px">love</div></div>
<div class="abs" style="left:271.6px;top:583px;width:964.4px;height:13px;display:flex;align-items:center"><div style="width:53.7px;font-family:'Liberation Mono',monospace;font-size:10.2px;color:#a4a4a4;-webkit-text-stroke:0.2px #a4a4a4;line-height:13px;white-space:nowrap;position:relative;top:1.4px">F4588</div><div style="flex:1;height:13px;background:#1f1f1f;border-radius:2px;position:relative;overflow:hidden"><div style="position:absolute;left:0;top:0;bottom:0;width:94.016%;background:#0a78d4;border-radius:2px"></div></div><div style="width:64px;text-align:right;font-family:'Liberation Mono',monospace;font-size:10.2px;font-weight:400;-webkit-text-stroke:0.15px #d8d8d8;color:#d8d8d8;line-height:13px;white-space:nowrap;position:relative;top:1px">13.025</div><div style="margin-left:7.6px;font-size:9.4px;color:#8a8a8a;line-height:13px;white-space:nowrap;position:relative;top:1.2px">democracy</div></div>
<div class="abs" style="left:271.6px;top:599px;width:964.4px;height:13px;display:flex;align-items:center"><div style="width:53.7px;font-family:'Liberation Mono',monospace;font-size:10.2px;color:#a4a4a4;-webkit-text-stroke:0.2px #a4a4a4;line-height:13px;white-space:nowrap;position:relative;top:1.4px">F518</div><div style="flex:1;height:13px;background:#1f1f1f;border-radius:2px;position:relative;overflow:hidden"><div style="position:absolute;left:0;top:0;bottom:0;width:92.970%;background:#0a78d4;border-radius:2px"></div></div><div style="width:64px;text-align:right;font-family:'Liberation Mono',monospace;font-size:10.2px;font-weight:400;-webkit-text-stroke:0.15px #d8d8d8;color:#d8d8d8;line-height:13px;white-space:nowrap;position:relative;top:1px">12.880</div><div style="margin-left:7.6px;font-size:9.4px;color:#8a8a8a;line-height:13px;white-space:nowrap;position:relative;top:1.2px">anxiety</div></div>
<div class="abs" style="left:271.6px;top:615px;width:964.4px;height:13px;display:flex;align-items:center"><div style="width:53.7px;font-family:'Liberation Mono',monospace;font-size:10.2px;color:#a4a4a4;-webkit-text-stroke:0.2px #a4a4a4;line-height:13px;white-space:nowrap;position:relative;top:1.4px">F3735</div><div style="flex:1;height:13px;background:#1f1f1f;border-radius:2px;position:relative;overflow:hidden"><div style="position:absolute;left:0;top:0;bottom:0;width:92.630%;background:#0a78d4;border-radius:2px"></div></div><div style="width:64px;text-align:right;font-family:'Liberation Mono',monospace;font-size:10.2px;font-weight:400;-webkit-text-stroke:0.15px #d8d8d8;color:#d8d8d8;line-height:13px;white-space:nowrap;position:relative;top:1px">12.833</div><div style="margin-left:7.6px;font-size:9.4px;color:#8a8a8a;line-height:13px;white-space:nowrap;position:relative;top:1.2px">angry</div></div>
<div class="abs" style="left:271.6px;top:631px;width:964.4px;height:13px;display:flex;align-items:center"><div style="width:53.7px;font-family:'Liberation Mono',monospace;font-size:10.2px;color:#a4a4a4;-webkit-text-stroke:0.2px #a4a4a4;line-height:13px;white-space:nowrap;position:relative;top:1.4px">F7742</div><div style="flex:1;height:13px;background:#1f1f1f;border-radius:2px;position:relative;overflow:hidden"><div style="position:absolute;left:0;top:0;bottom:0;width:92.558%;background:#0a78d4;border-radius:2px"></div></div><div style="width:64px;text-align:right;font-family:'Liberation Mono',monospace;font-size:10.2px;font-weight:400;-webkit-text-stroke:0.15px #d8d8d8;color:#d8d8d8;line-height:13px;white-space:nowrap;position:relative;top:1px">12.823</div><div style="margin-left:7.6px;font-size:9.4px;color:#8a8a8a;line-height:13px;white-space:nowrap;position:relative;top:1.2px">molecule</div></div>
<div class="abs" style="left:271.6px;top:647px;width:964.4px;height:13px;display:flex;align-items:center"><div style="width:53.7px;font-family:'Liberation Mono',monospace;font-size:10.2px;color:#a4a4a4;-webkit-text-stroke:0.2px #a4a4a4;line-height:13px;white-space:nowrap;position:relative;top:1.4px">F8076</div><div style="flex:1;height:13px;background:#1f1f1f;border-radius:2px;position:relative;overflow:hidden"><div style="position:absolute;left:0;top:0;bottom:0;width:92.046%;background:#0a78d4;border-radius:2px"></div></div><div style="width:64px;text-align:right;font-family:'Liberation Mono',monospace;font-size:10.2px;font-weight:400;-webkit-text-stroke:0.15px #d8d8d8;color:#d8d8d8;line-height:13px;white-space:nowrap;position:relative;top:1px">12.752</div><div style="margin-left:7.6px;font-size:9.4px;color:#8a8a8a;line-height:13px;white-space:nowrap;position:relative;top:1.2px">car</div></div>
<div class="abs" style="left:271.6px;top:663px;width:964.4px;height:13px;display:flex;align-items:center"><div style="width:53.7px;font-family:'Liberation Mono',monospace;font-size:10.2px;color:#a4a4a4;-webkit-text-stroke:0.2px #a4a4a4;line-height:13px;white-space:nowrap;position:relative;top:1.4px">F6181</div><div style="flex:1;height:13px;background:#1f1f1f;border-radius:2px;position:relative;overflow:hidden"><div style="position:absolute;left:0;top:0;bottom:0;width:91.649%;background:#0a78d4;border-radius:2px"></div></div><div style="width:64px;text-align:right;font-family:'Liberation Mono',monospace;font-size:10.2px;font-weight:400;-webkit-text-stroke:0.15px #d8d8d8;color:#d8d8d8;line-height:13px;white-space:nowrap;position:relative;top:1px">12.697</div><div style="margin-left:7.6px;font-size:9.4px;color:#8a8a8a;line-height:13px;white-space:nowrap;position:relative;top:1.2px">moon</div></div>
<div class="abs" style="left:271.6px;top:679px;width:964.4px;height:13px;display:flex;align-items:center"><div style="width:53.7px;font-family:'Liberation Mono',monospace;font-size:10.2px;color:#a4a4a4;-webkit-text-stroke:0.2px #a4a4a4;line-height:13px;white-space:nowrap;position:relative;top:1.4px">F7710</div><div style="flex:1;height:13px;background:#1f1f1f;border-radius:2px;position:relative;overflow:hidden"><div style="position:absolute;left:0;top:0;bottom:0;width:91.230%;background:#0a78d4;border-radius:2px"></div></div><div style="width:64px;text-align:right;font-family:'Liberation Mono',monospace;font-size:10.2px;font-weight:400;-webkit-text-stroke:0.15px #d8d8d8;color:#d8d8d8;line-height:13px;white-space:nowrap;position:relative;top:1px">12.639</div><div style="margin-left:7.6px;font-size:9.4px;color:#8a8a8a;line-height:13px;white-space:nowrap;position:relative;top:1.2px">hate</div></div>
<div class="abs" style="left:271.6px;top:695px;width:964.4px;height:13px;display:flex;align-items:center"><div style="width:53.7px;font-family:'Liberation Mono',monospace;font-size:10.2px;color:#a4a4a4;-webkit-text-stroke:0.2px #a4a4a4;line-height:13px;white-space:nowrap;position:relative;top:1.4px">F558</div><div style="flex:1;height:13px;background:#1f1f1f;border-radius:2px;position:relative;overflow:hidden"><div style="position:absolute;left:0;top:0;bottom:0;width:91.172%;background:#0a78d4;border-radius:2px"></div></div><div style="width:64px;text-align:right;font-family:'Liberation Mono',monospace;font-size:10.2px;font-weight:400;-webkit-text-stroke:0.15px #d8d8d8;color:#d8d8d8;line-height:13px;white-space:nowrap;position:relative;top:1px">12.631</div><div style="margin-left:7.6px;font-size:9.4px;color:#8a8a8a;line-height:13px;white-space:nowrap;position:relative;top:1.2px">cat</div></div>
<div class="abs" style="left:271.6px;top:711px;width:964.4px;height:13px;display:flex;align-items:center"><div style="width:53.7px;font-family:'Liberation Mono',monospace;font-size:10.2px;color:#a4a4a4;-webkit-text-stroke:0.2px #a4a4a4;line-height:13px;white-space:nowrap;position:relative;top:1.4px">F895</div><div style="flex:1;height:13px;background:#1f1f1f;border-radius:2px;position:relative;overflow:hidden"><div style="position:absolute;left:0;top:0;bottom:0;width:91.035%;background:#0a78d4;border-radius:2px"></div></div><div style="width:64px;text-align:right;font-family:'Liberation Mono',monospace;font-size:10.2px;font-weight:400;-webkit-text-stroke:0.15px #d8d8d8;color:#d8d8d8;line-height:13px;white-space:nowrap;position:relative;top:1px">12.612</div><div style="margin-left:7.6px;font-size:9.4px;color:#8a8a8a;line-height:13px;white-space:nowrap;position:relative;top:1.2px">justice</div></div>
<div class="abs" style="left:271.6px;top:727px;width:964.4px;height:13px;display:flex;align-items:center"><div style="width:53.7px;font-family:'Liberation Mono',monospace;font-size:10.2px;color:#a4a4a4;-webkit-text-stroke:0.2px #a4a4a4;line-height:13px;white-space:nowrap;position:relative;top:1.4px">F7178</div><div style="flex:1;height:13px;background:#1f1f1f;border-radius:2px;position:relative;overflow:hidden"><div style="position:absolute;left:0;top:0;bottom:0;width:90.862%;background:#0a78d4;border-radius:2px"></div></div><div style="width:64px;text-align:right;font-family:'Liberation Mono',monospace;font-size:10.2px;font-weight:400;-webkit-text-stroke:0.15px #d8d8d8;color:#d8d8d8;line-height:13px;white-space:nowrap;position:relative;top:1px">12.588</div><div style="margin-left:7.6px;font-size:9.4px;color:#8a8a8a;line-height:13px;white-space:nowrap;position:relative;top:1.2px">anxiety</div></div>
<div class="abs" style="left:271.6px;top:743px;width:964.4px;height:13px;display:flex;align-items:center"><div style="width:53.7px;font-family:'Liberation Mono',monospace;font-size:10.2px;color:#a4a4a4;-webkit-text-stroke:0.2px #a4a4a4;line-height:13px;white-space:nowrap;position:relative;top:1.4px">F1511</div><div style="flex:1;height:13px;background:#1f1f1f;border-radius:2px;position:relative;overflow:hidden"><div style="position:absolute;left:0;top:0;bottom:0;width:90.349%;background:#0a78d4;border-radius:2px"></div></div><div style="width:64px;text-align:right;font-family:'Liberation Mono',monospace;font-size:10.2px;font-weight:400;-webkit-text-stroke:0.15px #d8d8d8;color:#d8d8d8;line-height:13px;white-space:nowrap;position:relative;top:1px">12.517</div><div style="margin-left:7.6px;font-size:9.4px;color:#8a8a8a;line-height:13px;white-space:nowrap;position:relative;top:1.2px">hope</div></div>
<div class="abs" style="left:271.6px;top:759px;width:964.4px;height:13px;display:flex;align-items:center"><div style="width:53.7px;font-family:'Liberation Mono',monospace;font-size:10.2px;color:#a4a4a4;-webkit-text-stroke:0.2px #a4a4a4;line-height:13px;white-space:nowrap;position:relative;top:1.4px">F7432</div><div style="flex:1;height:13px;background:#1f1f1f;border-radius:2px;position:relative;overflow:hidden"><div style="position:absolute;left:0;top:0;bottom:0;width:90.090%;background:#0a78d4;border-radius:2px"></div></div><div style="width:64px;text-align:right;font-family:'Liberation Mono',monospace;font-size:10.2px;font-weight:400;-webkit-text-stroke:0.15px #d8d8d8;color:#d8d8d8;line-height:13px;white-space:nowrap;position:relative;top:1px">12.481</div><div style="margin-left:7.6px;font-size:9.4px;color:#8a8a8a;line-height:13px;white-space:nowrap;position:relative;top:1.2px">justice</div></div>
<div class="abs" style="left:271.6px;top:775px;width:964.4px;height:13px;display:flex;align-items:center"><div style="width:53.7px;font-family:'Liberation Mono',monospace;font-size:10.2px;color:#a4a4a4;-webkit-text-stroke:0.2px #a4a4a4;line-height:13px;white-space:nowrap;position:relative;top:1.4px">F1604</div><div style="flex:1;height:13px;background:#1f1f1f;border-radius:2px;position:relative;overflow:hidden"><div style="position:absolute;left:0;top:0;bottom:0;width:89.822%;background:#0a78d4;border-radius:2px"></div></div><div style="width:64px;text-align:right;font-family:'Liberation Mono',monospace;font-size:10.2px;font-weight:400;-webkit-text-stroke:0.15px #d8d8d8;color:#d8d8d8;line-height:13px;white-space:nowrap;position:relative;top:1px">12.444</div><div style="margin-left:7.6px;font-size:9.4px;color:#8a8a8a;line-height:13px;white-space:nowrap;position:relative;top:1.2px">chair</div></div>
<div class="abs" style="left:271.6px;top:791px;width:964.4px;height:13px;display:flex;align-items:center"><div style="width:53.7px;font-family:'Liberation Mono',monospace;font-size:10.2px;color:#a4a4a4;-webkit-text-stroke:0.2px #a4a4a4;line-height:13px;white-space:nowrap;position:relative;top:1.4px">F2001</div><div style="flex:1;height:13px;background:#1f1f1f;border-radius:2px;position:relative;overflow:hidden"><div style="position:absolute;left:0;top:0;bottom:0;width:89.505%;background:#0a78d4;border-radius:2px"></div></div><div style="width:64px;text-align:right;font-family:'Liberation Mono',monospace;font-size:10.2px;font-weight:400;-webkit-text-stroke:0.15px #d8d8d8;color:#d8d8d8;line-height:13px;white-space:nowrap;position:relative;top:1px">12.400</div><div style="margin-left:7.6px;font-size:9.4px;color:#8a8a8a;line-height:13px;white-space:nowrap;position:relative;top:1.2px">time</div></div>
<div class="abs" style="left:1263px;top:100px;width:9px;height:428px;background:#353535;border-radius:5px"></div>
<div class="abs" style="left:0px;top:792px;width:1272px;height:24px;background:#181818;border-top:1px solid #2a2a2a;border-bottom:1px solid #262626"></div>
<svg class="abs" style="left:9.3px;top:797.3px;" width="12.2" height="12.2" viewBox="0 0 24 24" fill="none" stroke="#3b8ee6" stroke-width="2" stroke-linecap="round" stroke-linejoin="round"><rect width="18" height="18" x="3" y="3" rx="2"/><path d="M9 3v18"/><path d="m16 15-3-3 3-3"/></svg>
<div class="t" style="left:25.40px;top:799.52px;font-size:9.9px;color:#3b8ee6;font-weight:400;font-family:'Liberation Sans',sans-serif;">Sidebar</div>
<div class="t" style="left:610.90px;top:799.33px;font-size:10px;color:#2f6fc4;font-weight:400;font-family:'Liberation Sans',sans-serif;">Terminal</div>
<div class="t" style="left:1200.40px;top:799.95px;font-size:10.1px;color:#9a9a9a;font-weight:400;font-family:'Liberation Sans',sans-serif;">Properties</div>
<svg class="abs" style="left:1251px;top:798.5px;" width="11" height="11" viewBox="0 0 24 24" fill="none" stroke="#9a9a9a" stroke-width="2" stroke-linecap="round" stroke-linejoin="round"><rect width="18" height="18" x="3" y="3" rx="2"/><path d="M15 3v18"/><path d="m8 9 3 3-3 3"/></svg>
<div class="abs" style="left:0px;top:816px;width:1272px;height:25px;background:#181818"></div>
<div class="t" style="left:11.50px;top:825.17px;font-size:10.2px;color:#8c8c8c;font-weight:700;font-family:'Liberation Sans',sans-serif;letter-spacing:0.6px;">TERMINAL</div>
<div class="abs" style="left:76.2px;top:825px;width:8.200000000000003px;height:8px;background:#78d878;border-radius:50%"></div>
<div class="t" style="left:91.90px;top:824.77px;font-size:10.2px;color:#8a8a8a;font-weight:400;font-family:'Liberation Sans',sans-serif;">119 lines</div>
<svg class="abs" style="left:1203px;top:822px;" width="11" height="12" viewBox="0 0 24 24" fill="none" stroke="#8a8a8a" stroke-width="2" stroke-linecap="round" stroke-linejoin="round"><path d="M3 6h18"/><path d="M19 6v14c0 1-1 2-2 2H7c-1 0-2-1-2-2V6"/><path d="M8 6V4c0-1 1-2 2-2h4c1 0 2 1 2 2v2"/><line x1="10" x2="10" y1="11" y2="17"/><line x1="14" x2="14" y1="11" y2="17"/></svg>
<svg class="abs" style="left:1224px;top:822px;" width="11.5" height="11.5" viewBox="0 0 24 24" fill="none" stroke="#8a8a8a" stroke-width="2" stroke-linecap="round" stroke-linejoin="round"><path d="M3 12a9 9 0 1 0 9-9 9.75 9.75 0 0 0-6.74 2.74L3 8"/><path d="M3 3v5h5"/></svg>
<svg class="abs" style="left:1248px;top:822.5px;" width="12" height="12" viewBox="0 0 24 24" fill="none" stroke="#8a8a8a" stroke-width="2" stroke-linecap="round" stroke-linejoin="round"><path d="m6 9 6 6 6-6"/></svg>
<div class="abs" style="left:0px;top:841px;width:1272px;height:161px;background:#0b0b0b"></div>
<div class="t" style="left:11.70px;top:847.14px;font-size:11.04px;color:#b4b4b4;font-weight:400;font-family:'Liberation Mono',monospace;-webkit-text-stroke:0.25px #b4b4b4">[05:54:11] INFO model-surgery — Chat WebSocket disconnected</div>
<div class="t" style="left:11.70px;top:864.09px;font-size:11.04px;color:#b4b4b4;font-weight:400;font-family:'Liberation Mono',monospace;-webkit-text-stroke:0.25px #b4b4b4">[05:54:11] INFO model-surgery — Chat WebSocket connected</div>
<div class="t" style="left:11.70px;top:881.04px;font-size:11.04px;color:#b4b4b4;font-weight:400;font-family:'Liberation Mono',monospace;-webkit-text-stroke:0.25px #b4b4b4">[05:54:11] INFO model-surgery — Chat WebSocket connected</div>
<div class="t" style="left:11.70px;top:897.99px;font-size:11.04px;color:#b4b4b4;font-weight:400;font-family:'Liberation Mono',monospace;-webkit-text-stroke:0.25px #b4b4b4">[05:54:14] INFO model-surgery — Chat WebSocket disconnected</div>
<div class="t" style="left:11.70px;top:914.94px;font-size:11.04px;color:#b4b4b4;font-weight:400;font-family:'Liberation Mono',monospace;-webkit-text-stroke:0.25px #b4b4b4">[05:54:14] INFO model-surgery — Chat WebSocket disconnected</div>
<div class="t" style="left:11.70px;top:931.89px;font-size:11.04px;color:#b4b4b4;font-weight:400;font-family:'Liberation Mono',monospace;-webkit-text-stroke:0.25px #b4b4b4">[05:55:54] INFO model-surgery — Diagnostics on &#39;distilbert/distilgpt2&#39;: 5 ok, 2 warn, 0 critical (7 checks)</div>
<div class="t" style="left:11.70px;top:948.84px;font-size:11.04px;color:#b4b4b4;font-weight:400;font-family:'Liberation Mono',monospace;-webkit-text-stroke:0.25px #b4b4b4">[05:55:54] INFO model-surgery — Diagnostics on &#39;distilbert/distilgpt2&#39;: 5 ok, 2 warn, 0 critical (7 checks)</div>
<div class="t" style="left:11.70px;top:965.79px;font-size:11.04px;color:#b4b4b4;font-weight:400;font-family:'Liberation Mono',monospace;-webkit-text-stroke:0.25px #b4b4b4">[05:57:14] INFO model-surgery — Trained SAE for distilbert/distilgpt2 — layer 3, 8192 features</div>
<div class="t" style="left:11.70px;top:982.74px;font-size:11.04px;color:#b4b4b4;font-weight:400;font-family:'Liberation Mono',monospace;-webkit-text-stroke:0.25px #b4b4b4">[05:57:14] INFO model-surgery — Trained SAE for distilbert/distilgpt2 — layer 3, 8192 features</div>
<div class="abs" style="left:1263px;top:987px;width:9px;height:15px;background:#3a3a3a;border-radius:5px"></div>
<div class="abs" style="left:1272px;top:2px;width:7px;height:1012px;background:#151719"></div>
<div class="abs" style="left:0px;top:1002px;width:1279px;height:12px;background:#151719"></div>
</div></body></html>
